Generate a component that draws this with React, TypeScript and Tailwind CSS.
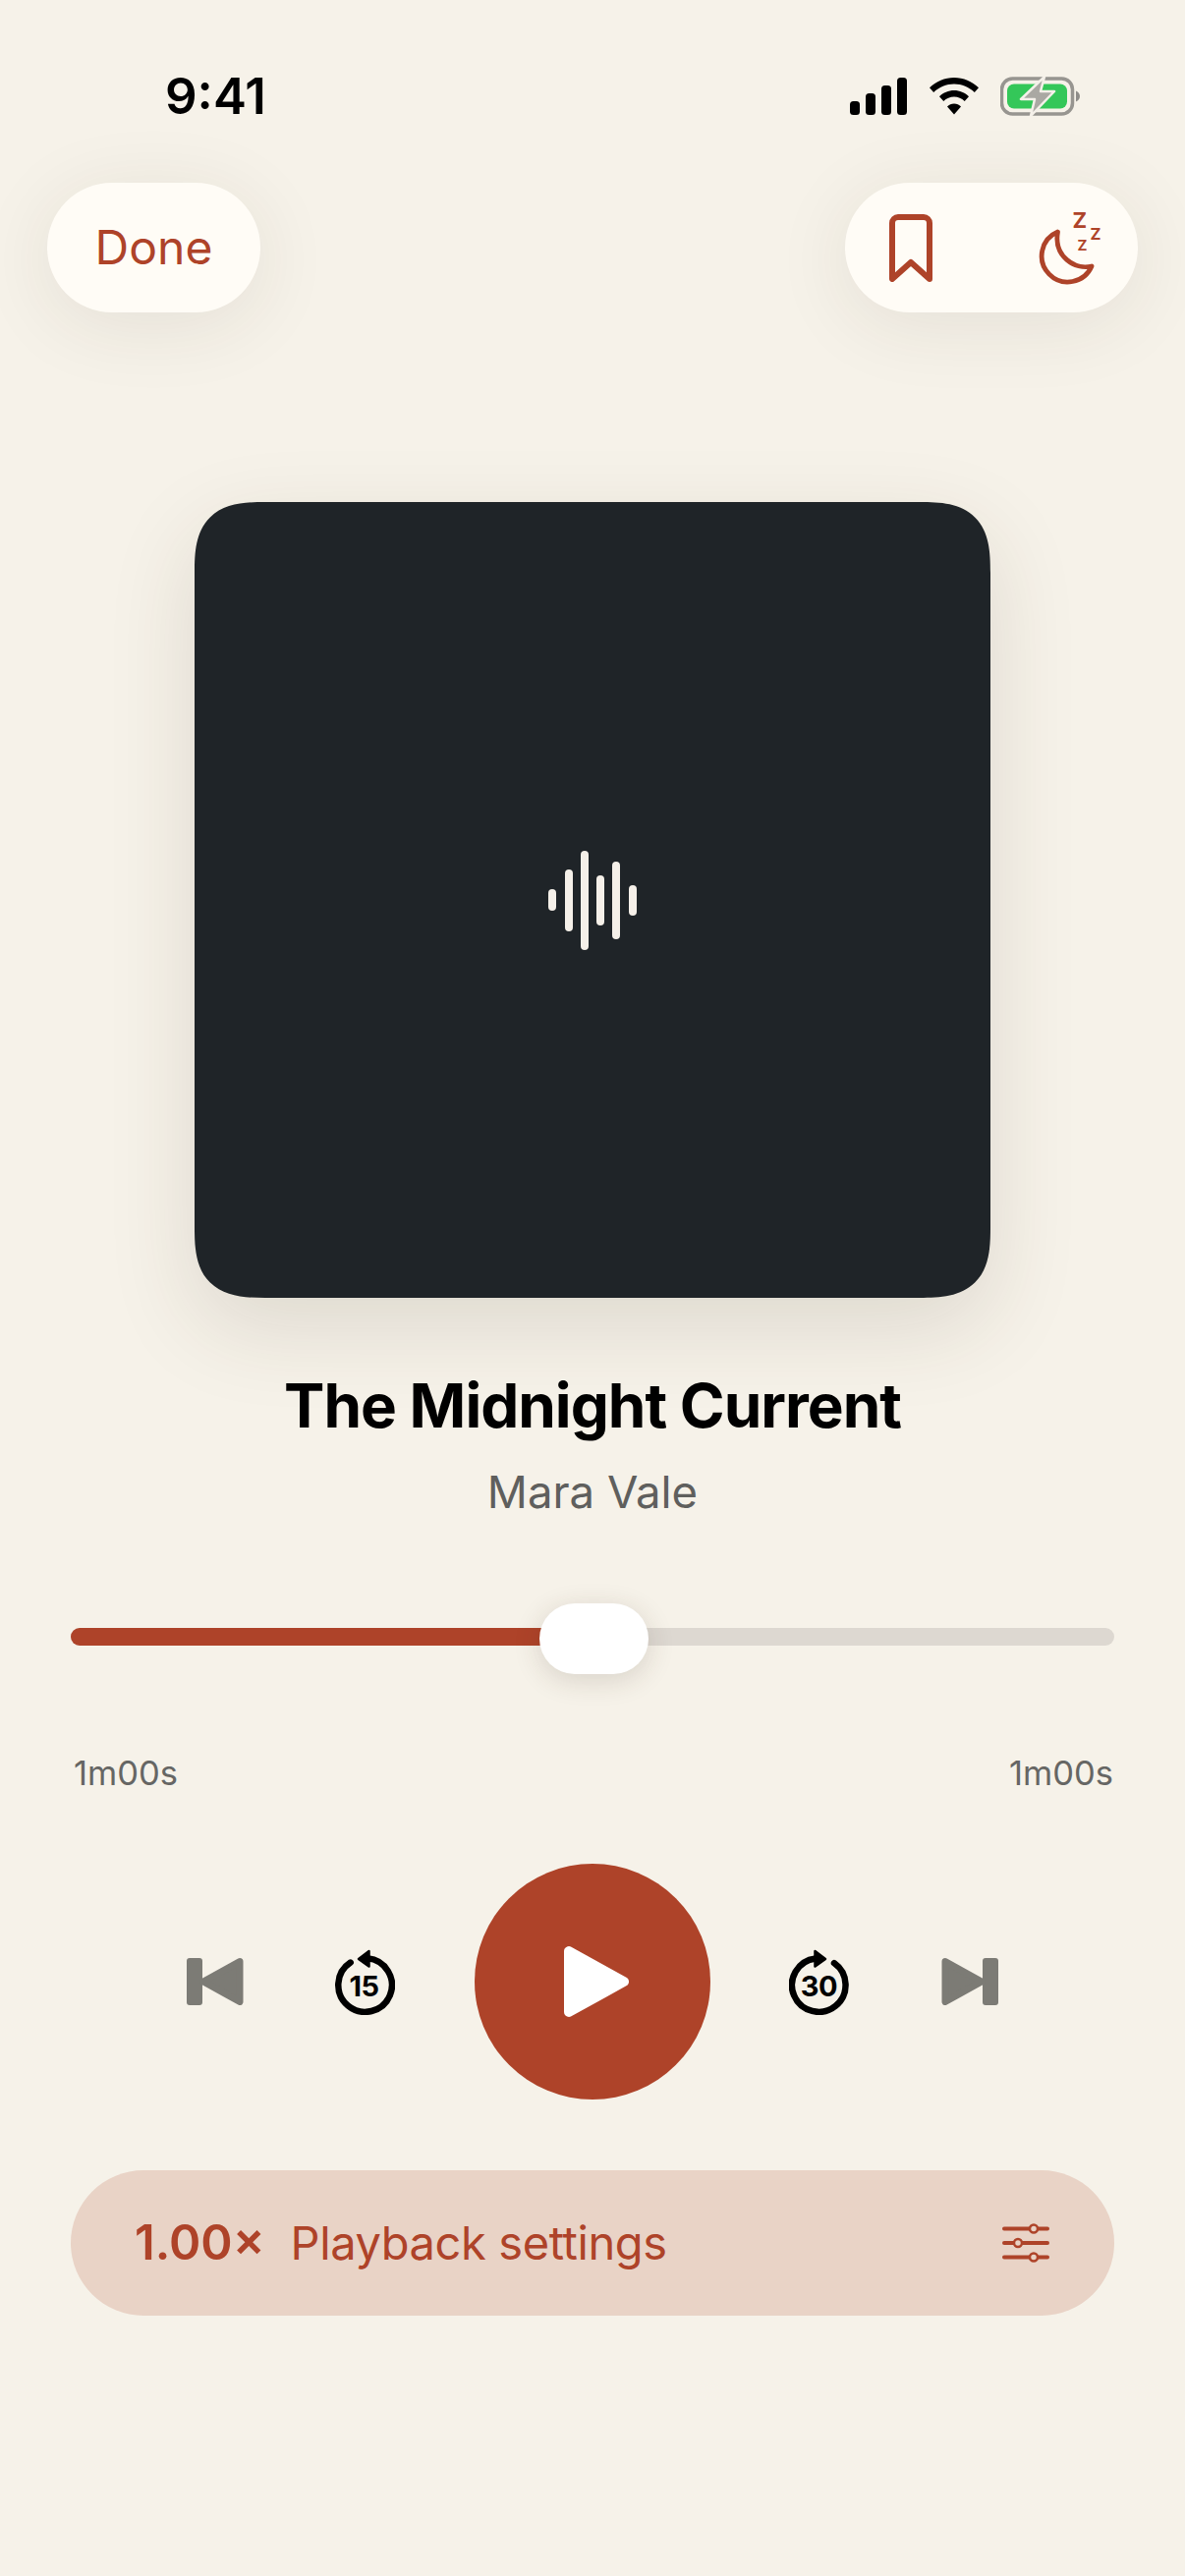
const rust = "#ae4329";
const sans = "font-['Inter','Noto_Sans',sans-serif]";

function StatusIcons() {
  return (
    <div className="flex items-center">
      <svg width="58" height="38" viewBox="0 0 58 38" className="block" fill="#000">
        <rect x="0" y="24" width="10" height="14" rx="3.5" />
        <rect x="16" y="16" width="10" height="22" rx="3.5" />
        <rect x="32" y="8" width="10" height="30" rx="3.5" />
        <rect x="48" y="0" width="10" height="38" rx="3.5" />
      </svg>
      <svg width="50" height="38" viewBox="0 0 50 38" className="ml-[23px] block" fill="#000">
        <path d="M25 0C34.5 0 43.2 3.8 50 10.3L45.8 15C40.2 9.6 33 6.5 25 6.5S9.800 9.600 4.200 15L0 10.300C6.800 3.800 15.500 0 25 0Z" />
        <path d="M25 13C30.700 13 36 15.300 40 19.200L35.700 23.900C32.800 21.100 29 19.500 25 19.500S17.200 21.100 14.300 23.900L10 19.200C14 15.300 19.300 13 25 13Z" />
        <path d="M25 26.500C27.700 26.500 30.200 27.600 32 29.400L25 37.500L18 29.400C19.800 27.600 22.300 26.500 25 26.500Z" />
      </svg>
      <svg width="82" height="40" viewBox="0 0 82 40" className="ml-[22px] block">
        <rect x="1.500" y="2" width="72" height="36" rx="11" fill="none" stroke="#979590" strokeWidth="3.500" />
        <rect x="7" y="7.500" width="61" height="25" rx="7" fill="#34c759" />
        <path d="M77 14.500C79.500 15.500 81 17.500 81 20S79.500 24.500 77 25.500Z" fill="#8f8d89" />
        <path d="M45 0L21 23H35L31 40L55 15H41Z" fill="#aaa8a3" stroke="#f4f0e9" strokeWidth="2.500" strokeLinejoin="round" />
      </svg>
    </div>
  );
}

function BookmarkIcon() {
  return (
    <svg width="44" height="69" viewBox="0 0 44 69" fill="none" stroke={rust} strokeWidth="6" strokeLinejoin="round" className="block">
      <path d="M3 66V9A6 6 0 0 1 9 3H35A6 6 0 0 1 41 9V66L22 49Z" />
    </svg>
  );
}

function SleepIcon() {
  return (
    <svg width="64" height="74" viewBox="0 0 64 74" fill="none" className="block overflow-visible">
      <path d="M18.500 21A26.500 26.500 0 1 0 53 56C36 60 14 46 18.500 21Z" stroke={rust} strokeWidth="4.800" strokeLinejoin="round" />
      <g fill={rust} fontFamily="Inter" fontWeight="700">
        <text x="33.500" y="17" fontSize="22">Z</text>
        <text x="51.500" y="29" fontSize="16.500">Z</text>
        <text x="38.500" y="39.500" fontSize="15">Z</text>
      </g>
    </svg>
  );
}

function SkipIcon({ flip }: { flip?: boolean }) {
  return (
    <svg width="58" height="48" viewBox="0 0 58 48" fill="#7c7b75" className={flip ? "block -scale-x-100" : "block"}>
      <rect x="0" y="0" width="16" height="48" rx="3" />
      <path d="M54 3.500 17 24 54 44.500V3.500Z" stroke="#7c7b75" strokeWidth="7" strokeLinejoin="round" />
    </svg>
  );
}

function JumpIcon({ label, forward }: { label: string; forward?: boolean }) {
  return (
    <svg width="61" height="67" viewBox="0 0 61 67" fill="none" className="block">
      {forward ? (
        <g>
          <path d="M46 14.200A27.300 27.300 0 1 1 27 9.400" stroke="#000" strokeWidth="6.500" strokeLinecap="round" />
          <path d="M26.500 2 37 10 26.500 17.500Z" fill="#000" stroke="#000" strokeWidth="2.500" strokeLinejoin="round" />
        </g>
      ) : (
        <g>
          <path d="M15.700 13.600A27.300 27.300 0 1 0 33 9.300" stroke="#000" strokeWidth="6.500" strokeLinecap="round" />
          <path d="M34.500 2 24 10 34.500 17.500Z" fill="#000" stroke="#000" strokeWidth="2.500" strokeLinejoin="round" />
        </g>
      )}
      <text x={forward ? 30.5 : 29.5} y="48" textAnchor="middle" fontFamily="Inter" fontWeight="700" fontSize="29" fill="#000" letterSpacing="-0.500">
        {label}
      </text>
    </svg>
  );
}

function SlidersIcon() {
  return (
    <svg width="48" height="40" viewBox="0 0 48 40" fill="none" stroke={rust} strokeWidth="4" strokeLinecap="round" className="block">
      <path d="M2 5.500H46M2 20H46M2 34.500H46" />
      <circle cx="32" cy="5.500" r="4" fill="#e9d3c6" strokeWidth="2.500" />
      <circle cx="16" cy="20" r="4" fill="#e9d3c6" strokeWidth="2.500" />
      <circle cx="32" cy="34.500" r="4" fill="#e9d3c6" strokeWidth="2.500" />
    </svg>
  );
}

const waveBars = [22, 63, 101, 51, 79, 31];

export default function App() {
  return (
    <div className={`${sans} flex min-h-screen w-full flex-col bg-[#f6f2e9] pt-[78px]`}>
      <div className="flex h-[40px] items-center justify-between pl-[168px] pr-[106px]">
        <span className="text-[51px] font-semibold leading-[40px] text-black">9:41</span>
        <StatusIcons />
      </div>

      <div className="mt-[68px] flex items-start justify-between px-[48px]">
        <button className="flex h-[132px] w-[217px] items-center justify-center rounded-[66px] bg-[#fffcf6] text-[48px] font-normal text-[#ae4329] shadow-[0_12px_80px_rgba(60,45,30,0.09)]">
          Done
        </button>
        <div className="flex h-[132px] w-[298px] items-center rounded-[66px] bg-[#fffcf6] pl-[45px] shadow-[0_12px_80px_rgba(60,45,30,0.09)]">
          <BookmarkIcon />
          <div className="ml-[109px]">
            <SleepIcon />
          </div>
        </div>
      </div>

      <div className="mx-auto mt-[193px] flex h-[810px] w-[810px] items-center justify-center gap-[8.300px] rounded-[72px] bg-[#1f2428] shadow-[0_30px_90px_rgba(60,45,30,0.13)] [corner-shape:superellipse(1.5)]">
        {waveBars.map((h, i) => (
          <div key={i} className="w-[8px] rounded-full bg-[#f5f0e9]" style={{ height: h }} />
        ))}
      </div>

      <h1 className="mt-[70px] text-center text-[62px] font-bold leading-[80px] tracking-[-1px] text-black">
        The Midnight Current
      </h1>
      <p className="mt-[18px] text-center text-[45.500px] leading-[60px] text-[#5f5f5d]">Mara Vale</p>

      <div className="relative mx-[72px] mt-[83px] flex h-[72px] items-center">
        <div className="mb-[4px] flex h-[18px] w-full overflow-hidden rounded-full bg-[#ddd8d1]">
          <div className="h-full w-[490px] bg-[#ae4329]" />
        </div>
        <div className="absolute left-[477px] top-0 h-[72px] w-[111px] rounded-[36px] bg-white shadow-[0_6px_28px_rgba(60,45,30,0.16)]" />
      </div>

      <div className="ml-[75px] mr-[73px] mt-[81px] flex h-[40px] items-center justify-between text-[34.500px] leading-[40px] text-[#666664]">
        <span>1m00s</span>
        <span>1m00s</span>
      </div>

      <div className="mt-[72px] flex items-center justify-center gap-[81px]">
        <div className="mr-[12px]">
          <SkipIcon />
        </div>
        <JumpIcon label="15" />
        <button className="flex h-[240px] w-[240px] items-center justify-center rounded-full bg-[#ae4329]">
          <svg width="68" height="74" viewBox="0 0 68 74" fill="#fff" className="ml-[8px] block">
            <path d="M6 6V68L62 37Z" stroke="#fff" strokeWidth="10" strokeLinejoin="round" />
          </svg>
        </button>
        <div className="-ml-[1px]">
          <JumpIcon label="30" forward />
        </div>
        <div className="ml-[13px]">
          <SkipIcon flip />
        </div>
      </div>

      <div className="mx-[72px] mt-[72px] flex h-[148px] items-center rounded-[74px] bg-[#e9d3c6] pl-[65px] pr-[66px] text-[#ae4329]">
        <span className="text-[49px] font-semibold">1.00×</span>
        <span className="ml-[26px] text-[47px] font-normal tracking-[-0.4px]">Playback settings</span>
        <div className="ml-auto">
          <SlidersIcon />
        </div>
      </div>
    </div>
  );
}
